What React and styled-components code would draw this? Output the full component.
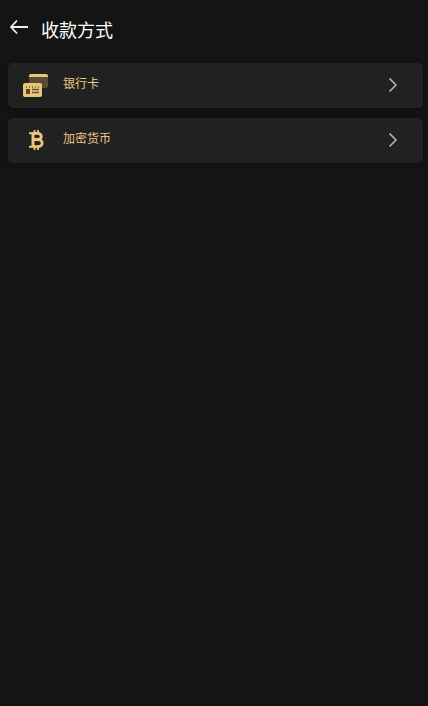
import React from 'react';
import styled, { createGlobalStyle } from 'styled-components';

const GlobalStyle = createGlobalStyle`
    body {
      margin: 0;
      background: #141414;
      font-family: "Liberation Sans", "Noto Sans CJK SC", sans-serif;
    }
`;

const Page = styled.div`
    min-height: 100vh;
    background: #141414;
`;

const Header = styled.header`
    display: flex;
    align-items: flex-start;
    gap: 12px;
    padding: 18px 9px 19px;
`;

const BackButton = styled.button`
    display: flex;
    padding: 0;
    border: 0;
    background: none;
    color: #ecf0ec;
    cursor: pointer;
`;

const Title = styled.h1`
    margin: 0;
    color: #fff;
    font-size: 18px;
    font-weight: 400;
    line-height: 26px;
`;

const MethodList = styled.ul`
    display: flex;
    flex-direction: column;
    gap: 10px;
    margin: 0;
    padding: 0 5px 0 8px;
    list-style: none;
`;

const MethodButton = styled.button`
    display: flex;
    align-items: center;
    width: 100%;
    height: 45px;
    padding: 0 25px 0 15px;
    border: 0;
    border-radius: 5px;
    background: #212121;
    box-shadow: 0 2px 6px rgba(0, 0, 0, 0.3);
    color: #eac885;
    font-family: inherit;
    text-align: left;
    cursor: pointer;
`;

const MethodIcon = styled.span`
    display: flex;
    justify-content: center;
    width: 26px;
    margin-right: 14px;
`;

const MethodName = styled.span`
    flex: 1;
    padding-bottom: 4px;
    font-size: 12px;
    line-height: 18px;
`;

const BackIcon = () => (
    <svg width="20" height="18" viewBox="0 0 20 18" fill="none" stroke="currentColor" strokeWidth="1.8" aria-hidden="true">
        <path d="M8 2.5L2 9l6 6.5M2 9h17"/>
    </svg>
);

const ChevronIcon = () => (
    <svg width="10" height="16" viewBox="0 0 10 16" fill="none" stroke="#b4b4b4" strokeWidth="1.6" aria-hidden="true">
        <path d="M1.5 .5L8 7l-6.5 6.5"/>
    </svg>
);

const BankCardIcon = () => (
    <svg width="26" height="24" viewBox="0 0 26 24" aria-hidden="true">
        <rect x="6" y="0" width="19" height="14" rx="2" fill="#5c4938"/>
        <path d="M6 3V2a2 2 0 0 1 2-2h15a2 2 0 0 1 2 2v1z" fill="#eac57c"/>
        <rect x="0" y="9" width="19" height="14" rx="2" fill="#eac57c"/>
        <path d="M3.5 12v2M6.5 12v2M9.5 12v2M12.5 12v2M15.5 12v2" stroke="#8a724b"/>
        <rect x="3" y="15" width="4" height="5" fill="#574731"/>
        <path d="M9 15.500h7M9 18.500h7" stroke="#665338" strokeWidth="1.5"/>
    </svg>
);

const BitcoinIcon = () => (
    <svg width="16" height="24" viewBox="0 0 16 24" fill="none" stroke="#eac57c" aria-hidden="true">
        <path d="M6.500 1v3M10 1v3M6.500 18v3M10 18v3" strokeWidth="1.8"/>
        <path d="M1 4.200h9M1 17.800h9" strokeWidth="2"/>
        <path d="M5 4v14" strokeWidth="3"/>
        <path d="M5 4.300h4.500c5 0 5 6.200 0 6.200H5M9.500 10.500c6.200 0 6.200 7.200 0 7.200H5" strokeWidth="2.800"/>
    </svg>
);

const methods = [
    { id: 'bank', name: '银行卡', icon: <BankCardIcon/> },
    { id: 'crypto', name: '加密货币', icon: <BitcoinIcon/> },
];

const App = () => {
    return (
        <Page>
            <GlobalStyle/>
            <Header>
                <BackButton type="button" aria-label="返回">
                    <BackIcon/>
                </BackButton>
                <Title>收款方式</Title>
            </Header>
            <MethodList>
                {methods.map(i => (
                    <li key={i.id}>
                        <MethodButton type="button">
                            <MethodIcon>{i.icon}</MethodIcon>
                            <MethodName>{i.name}</MethodName>
                            <ChevronIcon/>
                        </MethodButton>
                    </li>
                ))}
            </MethodList>
        </Page>
    );
};

export default App;
